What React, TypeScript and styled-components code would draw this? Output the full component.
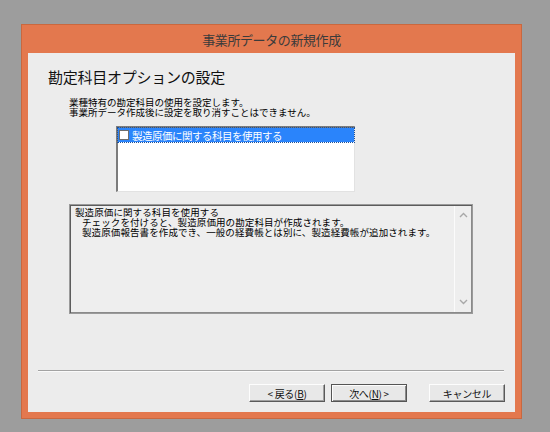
import * as React from 'react';
import styled, { createGlobalStyle } from 'styled-components';

const Global = createGlobalStyle`
  html, body {
    margin: 0;
    padding: 0;
    background: #9d9d9d;
    width: 550px;
    height: 432px;
    overflow: hidden;
  }
  body {
    font-family: "Noto Sans CJK JP", "Noto Sans", sans-serif;
    color: #000;
  }
`;

function App() {
  return (
    <>
      <Global />
      <Screen>
        <Window>
          <TitleBar>事業所データの新規作成</TitleBar>
          <Client>
            <Heading>勘定科目オプションの設定</Heading>
            <Intro>
              業種特有の勘定科目の使用を設定します。
              <br />
              事業所データ作成後に設定を取り消すことはできません。
            </Intro>
            <ListBox>
              <ListItem selected>
                <Check />
                製造原価に関する科目を使用する
              </ListItem>
            </ListBox>
            <InfoBox>
              <InfoText>
                <InfoLine>製造原価に関する科目を使用する</InfoLine>
                <InfoLine indent>チェックを付けると、製造原価用の勘定科目が作成されます。</InfoLine>
                <InfoLine indent>製造原価報告書を作成でき、一般の経費帳とは別に、製造経費帳が追加されます。</InfoLine>
              </InfoText>
              <ScrollBar>
                <svg width="9" height="6" viewBox="0 0 9 6">
                  <path d="M1 5 L4.5 1.5 L8 5" fill="none" stroke="#a8a8a8" strokeWidth="1.4" />
                </svg>
                <svg width="9" height="6" viewBox="0 0 9 6">
                  <path d="M1 1 L4.5 4.5 L8 1" fill="none" stroke="#a8a8a8" strokeWidth="1.4" />
                </svg>
              </ScrollBar>
            </InfoBox>
            <Separator />
            <ButtonRow>
              <Button>
                &lt; 戻る(<u>B</u>)
              </Button>
              <Button primary>
                次へ(<u>N</u>) &gt;
              </Button>
              <Button spaced>キャンセル</Button>
            </ButtonRow>
          </Client>
        </Window>
      </Screen>
    </>
  );
}

const Screen = styled.div`
  padding: 24px 0 0 21px;
`;

const Window = styled.div`
  width: 501px;
  height: 395px;
  box-sizing: border-box;
  background: #e3784e;
  border: 1px solid #c9683f;
  padding: 0 6px 6px 6px;
  display: flex;
  flex-direction: column;
`;

const TitleBar = styled.div`
  height: 28px;
  display: flex;
  align-items: center;
  justify-content: center;
  font-size: 13px;
  letter-spacing: -0.4px;
  color: #3b3b3b;
  padding-top: 1px;
  box-sizing: border-box;
`;

const Client = styled.div`
  flex: 1;
  background: #ececec;
  padding: 0 11px 0 10px;
  display: flex;
  flex-direction: column;
`;

const Heading = styled.div`
  margin: 16px 0 0 10px;
  font-size: 15px;
  line-height: 16px;
  letter-spacing: -0.25px;
  color: #111;
`;

const Intro = styled.div`
  margin: 12px 0 0 31px;
  font-size: 9.5px;
  line-height: 10px;
  letter-spacing: 0;
`;

const ListBox = styled.div`
  margin: 9px 0 0 78px;
  width: 239px;
  height: 66px;
  box-sizing: border-box;
  background: #fff;
  border-top: 2px solid #7c7c7c;
  border-left: 2px solid #7c7c7c;
  border-right: 1px solid #e2e2e2;
  border-bottom: 1px solid #e2e2e2;
`;

const ListItem = styled.div<{ selected?: boolean }>`
  height: 14px;
  display: flex;
  align-items: center;
  gap: 3px;
  padding-left: 1px;
  font-size: 10.5px;
  letter-spacing: -0.5px;
  background: ${(p) => (p.selected ? '#2a84fb' : 'transparent')};
  color: ${(p) => (p.selected ? '#fff' : '#000')};
  outline: ${(p) => (p.selected ? '1px dotted #1c4f99' : 'none')};
`;

const Check = styled.span`
  width: 10px;
  height: 10px;
  box-sizing: border-box;
  background: #fff;
  border: 1px solid #6d6d6d;
`;

const InfoBox = styled.div`
  margin: 12px 0 0 31px;
  width: 404px;
  height: 110px;
  box-sizing: border-box;
  border: 1px solid #9a9a9a;
  box-shadow: inset 1px 1px 0 #5c5c5c, inset -1px -1px 0 #8a8a8a;
  background: #eeeeee;
  display: flex;
`;

const InfoText = styled.div`
  flex: 1;
  padding: 2px 0 0 5px;
  font-size: 9.5px;
  line-height: 10px;
  letter-spacing: 0.1px;
`;

const InfoLine = styled.div<{ indent?: boolean }>`
  padding-left: ${(p) => (p.indent ? '7px' : '0')};
  white-space: nowrap;
`;

const ScrollBar = styled.div`
  width: 16px;
  margin: 1px 1px 1px 0;
  border-left: 1px solid #fbfbfb;
  display: flex;
  flex-direction: column;
  justify-content: space-between;
  align-items: center;
  padding: 6px 0 7px;
`;

const Separator = styled.div`
  margin-top: 56px;
  height: 1px;
  background: #a3a3a3;
  border-bottom: 1px solid #fafafa;
  width: 466px;
`;

const ButtonRow = styled.div`
  margin-top: 12px;
  display: flex;
  justify-content: flex-end;
  gap: 6px;
  width: 467px;
`;

const Button = styled.button<{ primary?: boolean; spaced?: boolean }>`
  width: 76px;
  height: 18px;
  flex: none;
  margin-left: ${(p) => (p.spaced ? '16px' : '0')};
  padding: 0;
  font-family: "Noto Sans CJK JP", "Noto Sans", sans-serif;
  font-size: 10px;
  letter-spacing: -0.3px;
  color: #111;
  background: #e8e8e8;
  box-sizing: border-box;
  border: 1px solid;
  border-color: ${(p) =>
    p.primary ? '#555 #555 #555 #555' : '#fdfdfd #5a5a5a #5a5a5a #fdfdfd'};
  box-shadow: ${(p) =>
    p.primary
      ? 'inset 1px 1px 0 #fdfdfd, inset -1px -1px 0 #8a8a8a'
      : 'inset -1px -1px 0 #a0a0a0'};
  display: flex;
  align-items: center;
  justify-content: center;
  u {
    text-underline-offset: 1px;
  }
`;

export default App;
